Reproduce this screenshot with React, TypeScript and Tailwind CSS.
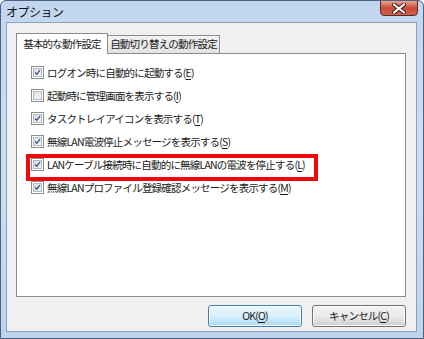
import React from "react";

type Item = {
  label: string;
  key: string;
  checked: boolean;
};

const items: Item[] = [
  { label: "ログオン時に自動的に起動する", key: "E", checked: true },
  { label: "起動時に管理画面を表示する", key: "I", checked: false },
  { label: "タスクトレイアイコンを表示する", key: "T", checked: true },
  { label: "無線LAN電波停止メッセージを表示する", key: "S", checked: true },
  { label: "LANケーブル接続時に自動的に無線LANの電波を停止する", key: "L", checked: true },
  { label: "無線LANプロファイル登録確認メッセージを表示する", key: "M", checked: true },
];

function CheckBox({ checked }: { checked: boolean }) {
  return (
    <div className="w-[13px] h-[13px] border border-[#8e8f8f] bg-white p-[1px] shrink-0">
      <div className="w-full h-full border border-[#b4b9c1] bg-gradient-to-br from-[#dcdee2] to-[#f6f6f6] relative">
        {checked && (
          <svg viewBox="0 0 9 9" className="absolute inset-0 w-full h-full">
            <path d="M1.5 4.5 L3.6 6.8 L7.6 1.6" fill="none" stroke="#2f4a8c" strokeWidth="1.6" />
          </svg>
        )}
      </div>
    </div>
  );
}

function Mnemonic({ text, k }: { text: string; k: string }) {
  return (
    <span className="whitespace-nowrap">
      {text}(<span className="underline underline-offset-2">{k}</span>)
    </span>
  );
}

export default function App() {
  return (
    <div
      className="relative w-[424px] h-[339px] bg-gradient-to-b from-[#c2d6ef] via-[#cfdff3] to-[#bed3ec] border border-[#4e6280] rounded-t-[6px] flex flex-col text-[10.5px] tracking-[-0.8px] text-[#1a1a1a] overflow-hidden"
      style={{ fontFamily: '"Noto Sans CJK JP", "Noto Sans", sans-serif' }}
    >
      {/* title bar */}
      <div className="h-[21px] flex items-start justify-between pl-[5px] pr-[5px]">
        <div className="text-[12px] tracking-[-0.5px] leading-[20px] pt-[1px] text-[#111]">オプション</div>
        <div className="w-[38px] h-[16px] -mt-[1px] rounded-b-[4px] border border-[#5d2a22] bg-gradient-to-b from-[#e8a493] via-[#c8493a] to-[#d0604c] flex items-center justify-center">
          <svg width="14" height="11" viewBox="0 0 14 11">
            <path d="M2 1.5 L12 9.5 M12 1.5 L2 9.5" stroke="#3b1712" strokeWidth="4" strokeLinecap="square" />
            <path d="M2 1.5 L12 9.5 M12 1.5 L2 9.5" stroke="#ffffff" strokeWidth="2" strokeLinecap="square" />
          </svg>
        </div>
      </div>

      {/* client area */}
      <div className="flex-1 ml-[5px] mr-[6px] mb-[6px] border border-[#8aa0bc] bg-[#f0f0f0] flex flex-col pl-[9px] pr-[10px] pt-[10px]">
        {/* tabs */}
        <div className="flex items-end h-[20px]">
          <div className="w-[92px] h-[21px] justify-center whitespace-nowrap border border-b-0 border-[#898c95] bg-white flex items-center leading-none relative z-10 -mb-[1px]">
            基本的な動作設定
          </div>
          <div className="w-[112px] h-[18px] justify-center whitespace-nowrap border border-l-0 border-b-0 border-[#898c95] bg-gradient-to-b from-[#f2f2f2] to-[#e3e3e3] flex items-center leading-none">
            自動切り替えの動作設定
          </div>
        </div>

        {/* panel */}
        <div className="h-[244px] border border-[#898c95] bg-white pt-[7px] pl-[14px] flex flex-col">
          {items.map((it) => (
            <div key={it.key} className="h-[23px] flex items-center gap-[3px]">
              <CheckBox checked={it.checked} />
              <Mnemonic text={it.label} k={it.key} />
            </div>
          ))}
        </div>

        {/* buttons */}
        <div className="flex justify-end gap-[10px] mt-[8px]">
          <button className="w-[94px] h-[22px] rounded-[3px] border border-[#3c7fb1] bg-gradient-to-b from-[#eaf6fd] via-[#d9f0fc] to-[#a7d9f5] shadow-[inset_0_0_0_1px_#ffffff] leading-none">
            <Mnemonic text="OK" k="O" />
          </button>
          <button className="w-[94px] h-[22px] rounded-[3px] border border-[#707070] bg-gradient-to-b from-[#f2f2f2] via-[#ebebeb] to-[#cfcfcf] shadow-[inset_0_0_0_1px_#fcfcfc] leading-none">
            <Mnemonic text="キャンセル" k="C" />
          </button>
        </div>
      </div>

      {/* annotation highlight */}
      <div className="absolute left-[25px] top-[153px] w-[292px] h-[27px] border-[4px] border-[#ee0a0a]" />
    </div>
  );
}
